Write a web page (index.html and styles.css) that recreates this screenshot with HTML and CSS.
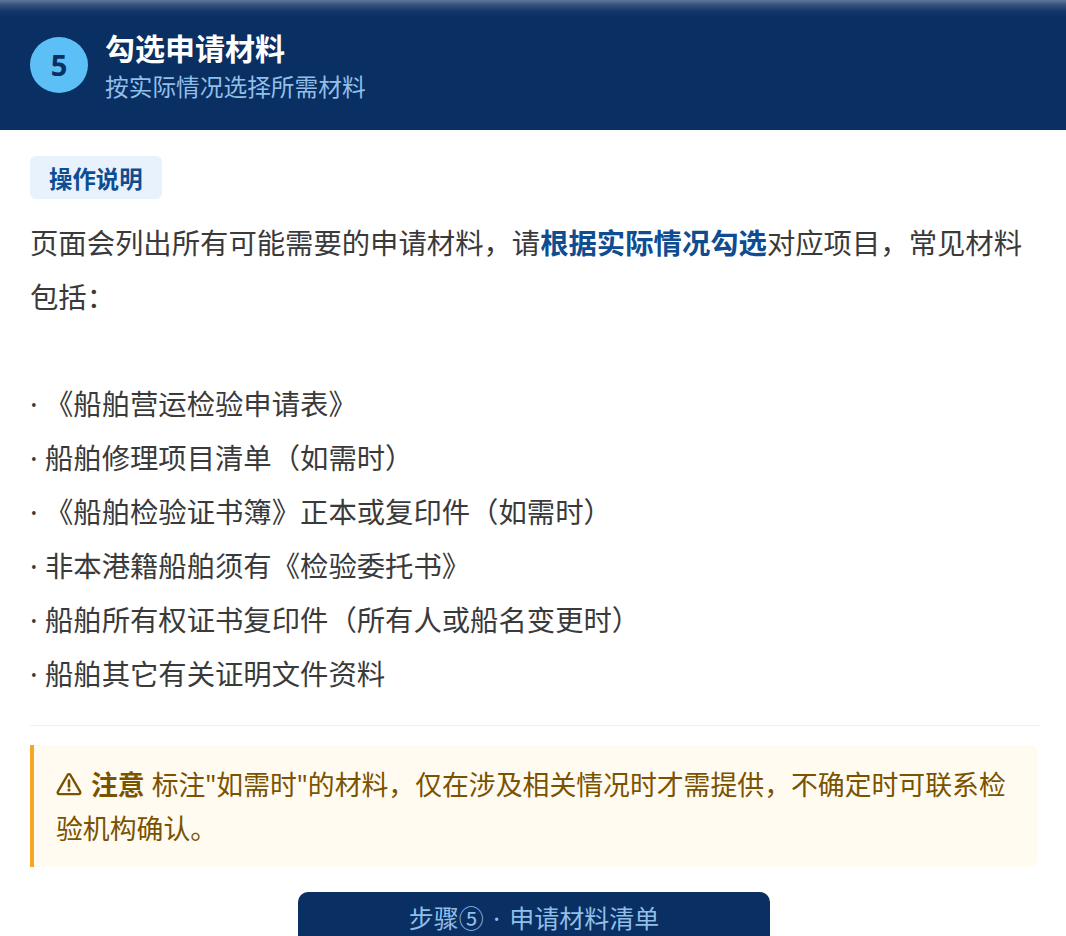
FILE: index.html
```html
<!DOCTYPE html>
<html lang="zh-CN">
<head>
<meta charset="utf-8">
<title>勾选申请材料</title>
<link rel="stylesheet" href="styles.css">
</head>
<body>
<header class="hero">
  <div class="badge">5</div>
  <div class="hero-text">
    <h1 class="title">勾选申请材料</h1>
    <p class="subtitle">按实际情况选择所需材料</p>
  </div>
</header>
<main class="content">
  <div class="tag">操作说明</div>
  <p class="body">页面会列出所有可能需要的申请材料，请<strong class="hl">根据实际情况勾选</strong>对应项目，常见材料包括：</p>
  <ul class="list">
    <li>· 《船舶营运检验申请表》</li>
    <li>· 船舶修理项目清单（如需时）</li>
    <li>· 《船舶检验证书簿》正本或复印件（如需时）</li>
    <li>· 非本港籍船舶须有《检验委托书》</li>
    <li>· 船舶所有权证书复印件（所有人或船名变更时）</li>
    <li>· 船舶其它有关证明文件资料</li>
  </ul>
  <hr class="rule">
  <div class="notice">
    <svg class="warn" viewBox="0 0 26 24" width="26" height="24" aria-hidden="true"><path d="M11.6 3 1.9 19.7A1.6 1.6 0 0 0 3.3 22.1H22.7A1.6 1.6 0 0 0 24.1 19.7L14.4 3A1.6 1.6 0 0 0 11.6 3Z" fill="none" stroke="currentColor" stroke-width="2.4" stroke-linejoin="round"/><path d="M13 8.5v6" stroke="currentColor" stroke-width="2.6" stroke-linecap="round"/><circle cx="13" cy="18" r="1.6" fill="currentColor"/></svg>
    <strong class="notice-head">注意</strong> 标注"如需时"的材料，仅在涉及相关情况时才需提供，不确定时可联系检验机构确认。
  </div>
  <div class="caption-row"><div class="caption">步骤⑤ <span class="dot">·</span> 申请材料清单</div></div>
</main>
</body>
</html>
```
FILE: styles.css
```css
* { box-sizing: border-box; }
html, body { margin: 0; padding: 0; height: 936px; overflow: hidden; }
body {
  background: #fff;
  font-family: "Noto Sans", "Noto Sans CJK SC", sans-serif;
  color: #3a3a3a;
}
.hero {
  height: 130px;
  display: flex;
  align-items: center;
  gap: 17px;
  padding: 0 30px;
  background: linear-gradient(180deg, #5f7696 0, #33527c 5px, #14376a 11px, #0a2f62 17px);
}
.badge {
  width: 58px;
  height: 56px;
  border-radius: 50%;
  background: #5cc0f7;
  color: #0a2f62;
  font: 700 29px/56px "Open Sans", sans-serif;
  text-align: center;
  flex: none;
}
.hero-text { padding-top: 4px; }
.title { margin: 0; font-size: 30px; line-height: 40px; font-weight: 700; color: #fff; }
.subtitle { margin: 0; font-size: 23.7px; line-height: 37px; color: #90bfe8; }
.content { padding: 26px 26px 0 30px; }
.tag {
  display: inline-block;
  height: 43px;
  padding: 0 19px;
  background: #e8f2fc;
  border-radius: 6px;
  font-size: 23.4px;
  line-height: 47px;
  font-weight: 700;
  color: #0e4d92;
  vertical-align: top;
}
.body { margin: 17px 0 0; font-size: 28.35px; line-height: 54px; }
.hl { color: #0e4d92; font-weight: 700; }
.list { list-style: none; margin: 53px 0 0; padding: 0; font-size: 28.35px; line-height: 54px; }
.rule { margin: 24px 0 0; border: 0; height: 1px; background: #f0f0f0; }
.notice {
  margin: 19px 2px 0 0;
  padding: 18px 20px 16px 22px;
  height: 122px;
  background: #fffbf0;
  border-left: 4px solid #f5a623;
  border-radius: 0 8px 8px 0;
  font-size: 26.85px;
  line-height: 44px;
  color: #7a5200;
}
.warn { vertical-align: -1px; margin-right: 2px; }
.notice-head { font-weight: 700; }
.caption-row { display: flex; justify-content: center; margin-top: 25px; }
.caption {
  width: 472px;
  height: 60px;
  margin-left: -2px;
  background: #0a2f62;
  border-radius: 10px 10px 0 0;
  font-size: 25px;
  line-height: 52px;
  text-align: center;
  color: #90bfe8;
}
.dot { margin: 0 3px; }
```
